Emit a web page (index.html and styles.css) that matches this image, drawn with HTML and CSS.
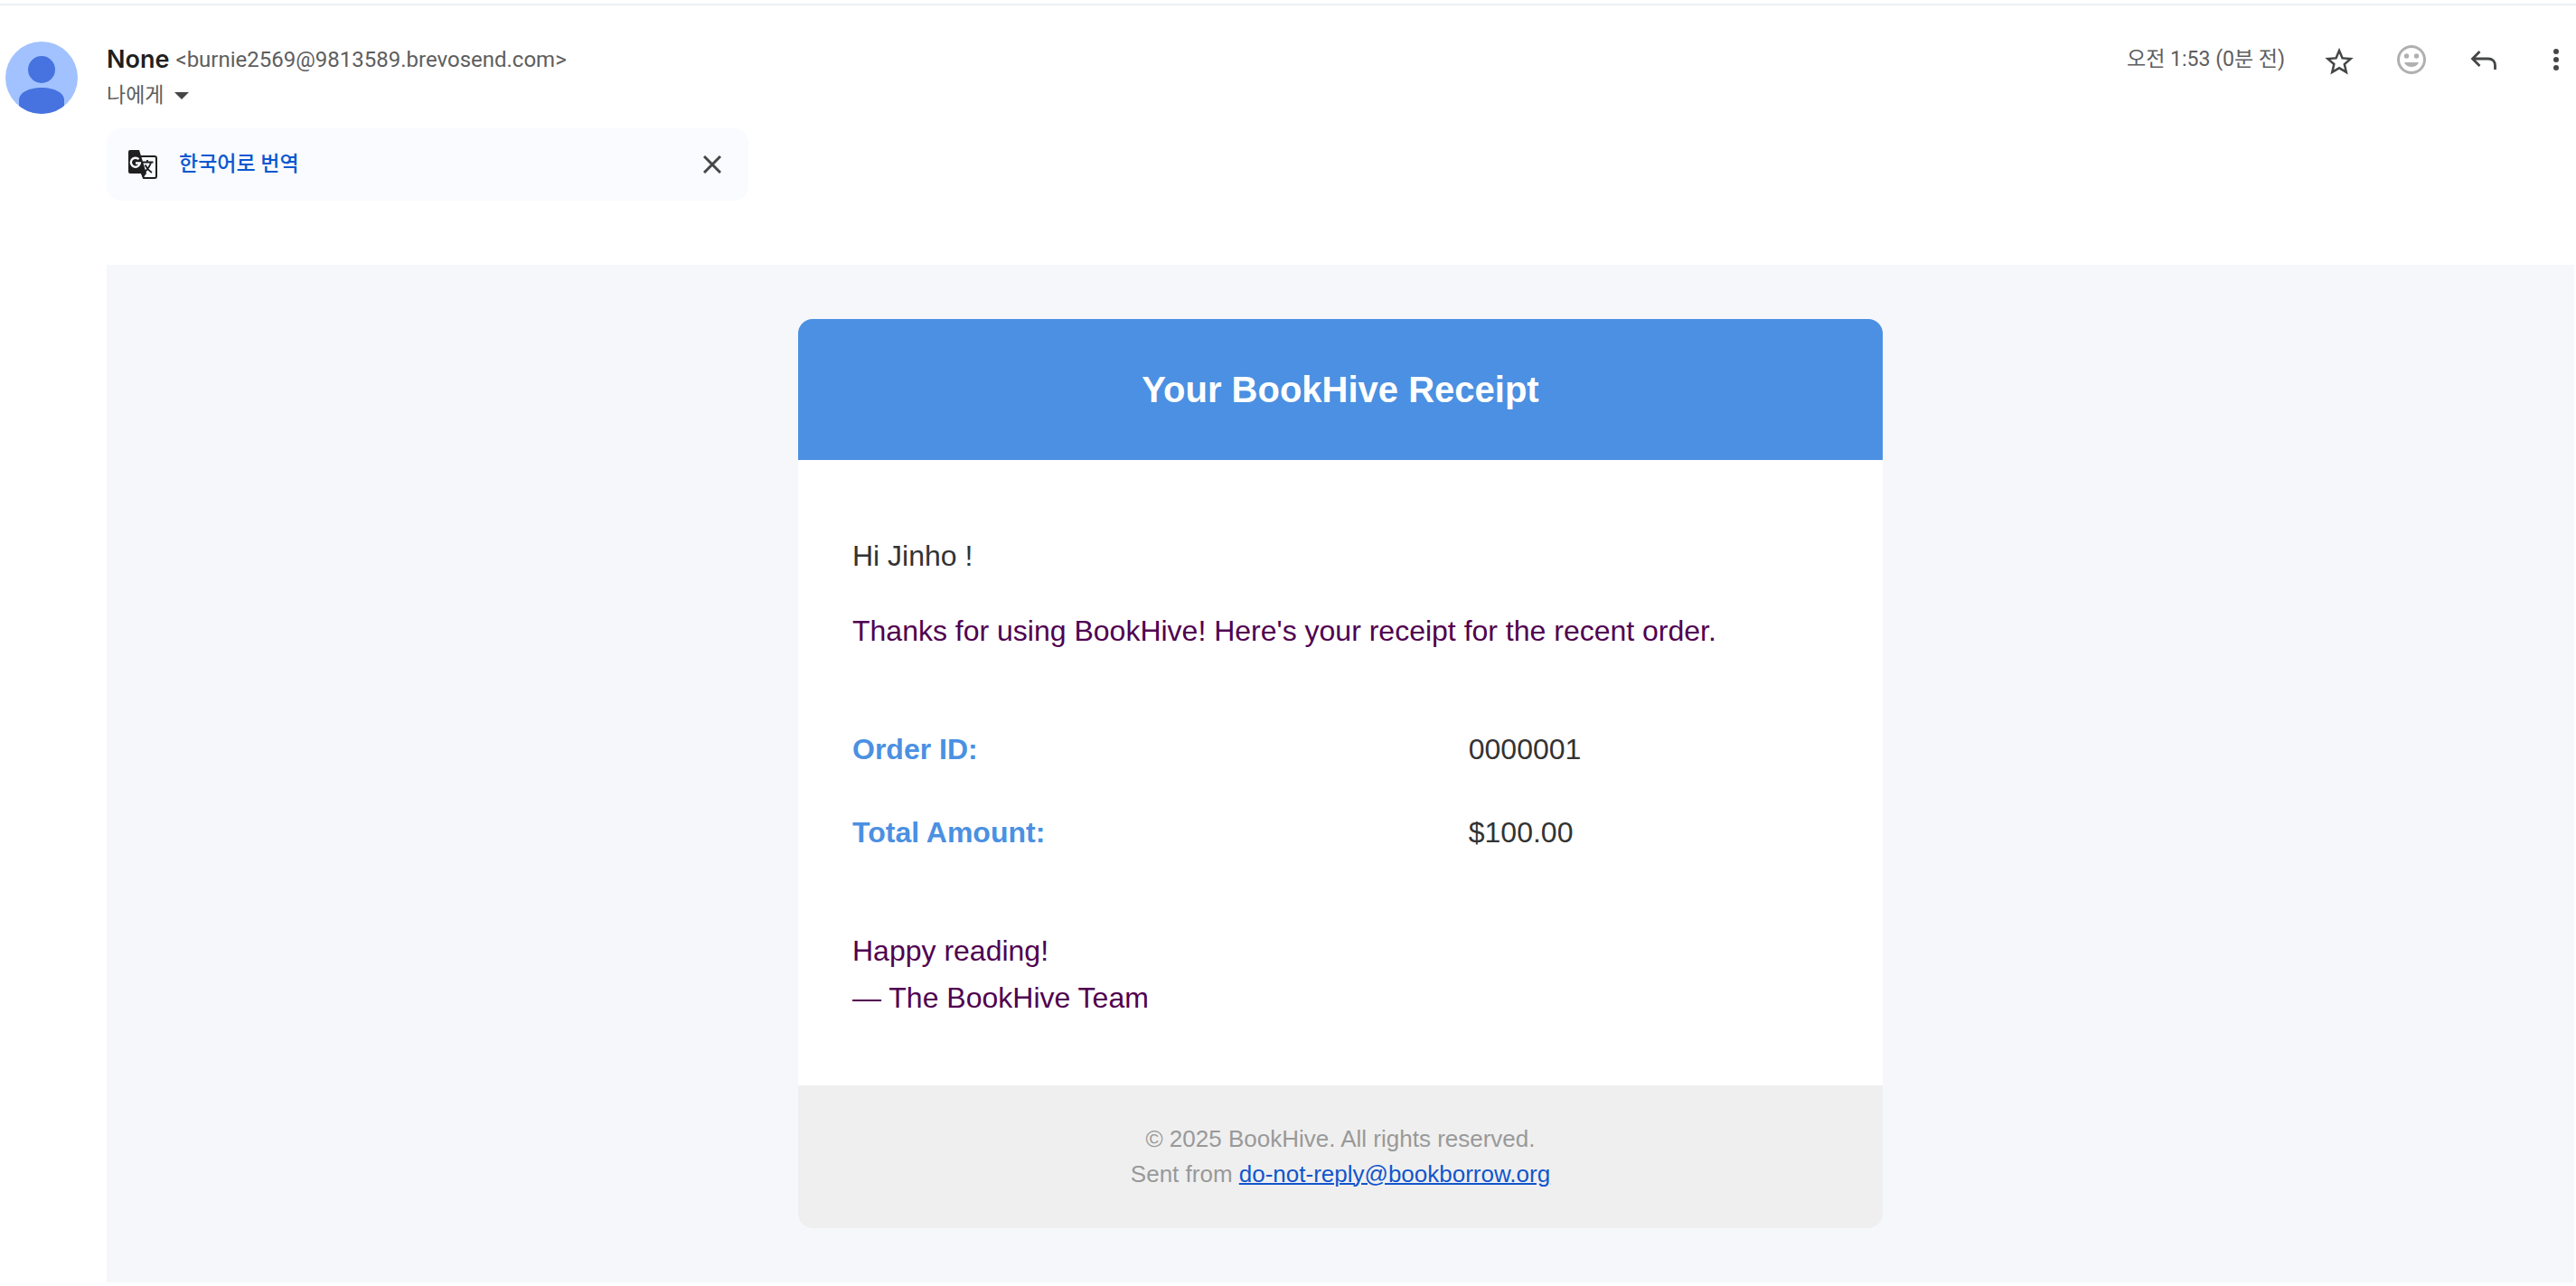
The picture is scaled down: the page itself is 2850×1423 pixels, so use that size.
FILE: index.html
```html
<!DOCTYPE html>
<html lang="ko">
<head>
<meta charset="utf-8">
<meta name="viewport" content="width=device-width, initial-scale=1">
<title>Your BookHive Receipt</title>
<link rel="stylesheet" href="styles.css">
</head>
<body>
<article class="message">
  <svg class="avatar" viewBox="0 0 80 80" aria-hidden="true">
    <defs><clipPath id="avatar-clip"><circle cx="40" cy="40" r="40"/></clipPath></defs>
    <g clip-path="url(#avatar-clip)">
      <rect width="80" height="80" fill="#a1c2fe"/>
      <circle cx="40" cy="31" r="15" fill="#4673df"/>
      <path fill="#4673df" d="M15 80V65C15 56 27 51 40 51s25 5 25 14v15z"/>
    </g>
  </svg>
  <div class="content">
    <header class="message-header">
      <div class="sender">
        <h3 class="from"><span class="name">None</span><span class="address">&lt;burnie2569@9813589.brevosend.com&gt;</span></h3>
        <button class="recipient" type="button">나에게
          <svg class="caret" viewBox="0 0 16 8" aria-hidden="true"><path d="M0 0h16L8 8z"/></svg>
        </button>
      </div>
      <div class="actions">
        <time class="time">오전 1:53 (0분 전)</time>
        <button class="icon-button" type="button" aria-label="별표">
          <svg viewBox="0 0 40 40" aria-hidden="true"><g transform="translate(1.200 3.600) scale(1.570)"><path fill="#444746" d="M22 9.240l-7.190-.620L12 2 9.190 8.630 2 9.240l5.460 4.730L5.820 21 12 17.270 18.180 21l-1.630-7.030L22 9.240zM12 15.400l-3.760 2.270 1-4.280-3.320-2.880 4.380-.380L12 6.100l1.710 4.040 4.380.380-3.320 2.880 1 4.280L12 15.400z"/></g></svg>
        </button>
        <button class="icon-button" type="button" aria-label="이모티콘 반응 추가">
          <svg viewBox="0 0 40 40" aria-hidden="true"><circle cx="20" cy="20" r="14.500" fill="none" stroke="#b0b0b0" stroke-width="3"/><g fill="#b0b0b0"><circle cx="14.500" cy="16" r="2.700"/><circle cx="25.500" cy="16" r="2.700"/><path d="M12 23h16c-1.200 3.300-4.200 5-8 5s-6.800-1.700-8-5z"/></g></svg>
        </button>
        <button class="icon-button" type="button" aria-label="답장">
          <svg viewBox="0 0 40 40" aria-hidden="true"><path fill="none" stroke="#444746" stroke-width="2.800" d="M15.500 11l-8 8 8 8M7.500 19H25c4.500 0 7.500 3 7.500 7.500V31"/></svg>
        </button>
        <button class="icon-button" type="button" aria-label="더보기">
          <svg viewBox="0 0 40 40" aria-hidden="true"><g fill="#444746"><circle cx="20" cy="11" r="3"/><circle cx="20" cy="20" r="3"/><circle cx="20" cy="29" r="3"/></g></svg>
        </button>
      </div>
    </header>

    <div class="translate">
      <svg class="translate-icon" viewBox="0 0 32 32" aria-hidden="true">
        <path fill="none" stroke="#1f1f1f" stroke-width="2" d="M14 7h15a2 2 0 0 1 2 2v20a2 2 0 0 1-2 2H17l-2-6"/>
        <path fill="#1f1f1f" d="M2 0h10l8 26-4 5-2-5H2a2 2 0 0 1-2-2V2a2 2 0 0 1 2-2z"/>
        <path fill="none" stroke="#f9fbff" stroke-width="2.400" d="M11.500 10.300A5 5 0 1 0 12.800 14.500H8"/>
        <path fill="none" stroke="#1f1f1f" stroke-width="1.800" d="M16 13.500h11.500M21 11v2.500M25 13.500c-1 5-4 8-7 11M18.500 16.500c2 4 4.500 6.500 7.500 8.500"/>
      </svg>
      <a class="translate-link" href="#">한국어로 번역</a>
      <button class="close" type="button" aria-label="닫기">
        <svg viewBox="0 0 20 20" aria-hidden="true"><path fill="none" stroke="#444746" stroke-width="3" d="M1 1l18 18M19 1L1 19"/></svg>
      </button>
    </div>

    <div class="mail">
      <section class="card">
        <h1 class="card-title">Your BookHive Receipt</h1>
        <div class="card-body">
          <p class="greeting">Hi Jinho !</p>
          <p>Thanks for using BookHive! Here's your receipt for the recent order.</p>
          <table class="order">
            <tr><th scope="row">Order ID:</th><td>0000001</td></tr>
            <tr><th scope="row">Total Amount:</th><td>$100.00</td></tr>
          </table>
          <p>Happy reading!<br>— The BookHive Team</p>
        </div>
        <footer class="card-footer">© 2025 BookHive. All rights reserved.<br>Sent from <a href="mailto:do-not-reply@bookborrow.org">do-not-reply@bookborrow.org</a></footer>
      </section>
    </div>
  </div>
</article>
</body>
</html>
```
FILE: styles.css
```css
* { box-sizing: border-box; }

body {
  margin: 0;
  padding-top: 4px;
  background: #fff;
  font-family: Roboto, "Noto Sans CJK KR", sans-serif;
  font-size: 23px;
  color: #5e5e5e;
}

button {
  padding: 0;
  border: 0;
  background: none;
  font: inherit;
  color: inherit;
  cursor: pointer;
}

svg { display: block; }

.message {
  display: flex;
  gap: 32px;
  padding: 40px 2px 4px 6px;
  border-top: 2px solid #eceff1;
}

.avatar { flex: none; width: 80px; height: 80px; }

.content { flex: 1; min-width: 0; }

.message-header {
  display: flex;
  justify-content: space-between;
  align-items: flex-start;
}

.from {
  display: flex;
  align-items: center;
  gap: 7px;
  height: 40px;
  margin: 0;
  font-size: 24px;
  font-weight: 400;
  line-height: 40px;
}
.name { font-family: Inter, sans-serif; font-size: 27px; font-weight: 600; color: #1f1f1f; }

.recipient { display: flex; align-items: center; gap: 12px; height: 40px; line-height: 40px; }
.caret { width: 16px; height: 8px; fill: #444746; }

.actions { display: flex; align-items: center; gap: 40px; height: 40px; }
.time { line-height: 40px; }
.icon-button { width: 40px; height: 40px; }

.translate {
  display: flex;
  align-items: center;
  gap: 24px;
  max-width: 710px;
  height: 80px;
  margin-top: 16px;
  padding: 0 30px 0 24px;
  border-radius: 16px;
  background: #f9fbff;
}
.translate-icon { width: 32px; height: 32px; }
.translate-link { height: 32px; line-height: 32px; color: #0b57d0; font-weight: 500; text-decoration: none; }
.close { width: 20px; height: 20px; margin-left: auto; }

.mail {
  margin-top: 71px;
  padding: 60px;
  background: #f5f7fb;
  font-family: "Liberation Sans", Arial, sans-serif;
}

.card {
  max-width: 1200px;
  margin: 0 auto;
  border-radius: 16px;
  overflow: hidden;
  background: #fff;
}

.card-title {
  margin: 0;
  padding: 48px;
  background: #4b90e2;
  color: #fff;
  font-size: 40px;
  line-height: 60px;
  text-align: center;
}

.card-body {
  padding: 80px 60px 71px;
  font-size: 32px;
  line-height: 52px;
  color: #500050;
}
.card-body p { margin: 0; }
.card-body .greeting { margin-bottom: 31px; color: #333; }

.order { width: 100%; margin: 59px 0; border-collapse: collapse; }
.order th, .order td { padding: 20px 0; text-align: left; }
.order th { color: #4b90e2; }
.order td { color: #333; }

.card-footer {
  padding: 40px;
  background: #efefef;
  color: #999;
  font-size: 26px;
  line-height: 39px;
  text-align: center;
}
.card-footer a { color: #1155cc; text-decoration-thickness: 2px; }
```
